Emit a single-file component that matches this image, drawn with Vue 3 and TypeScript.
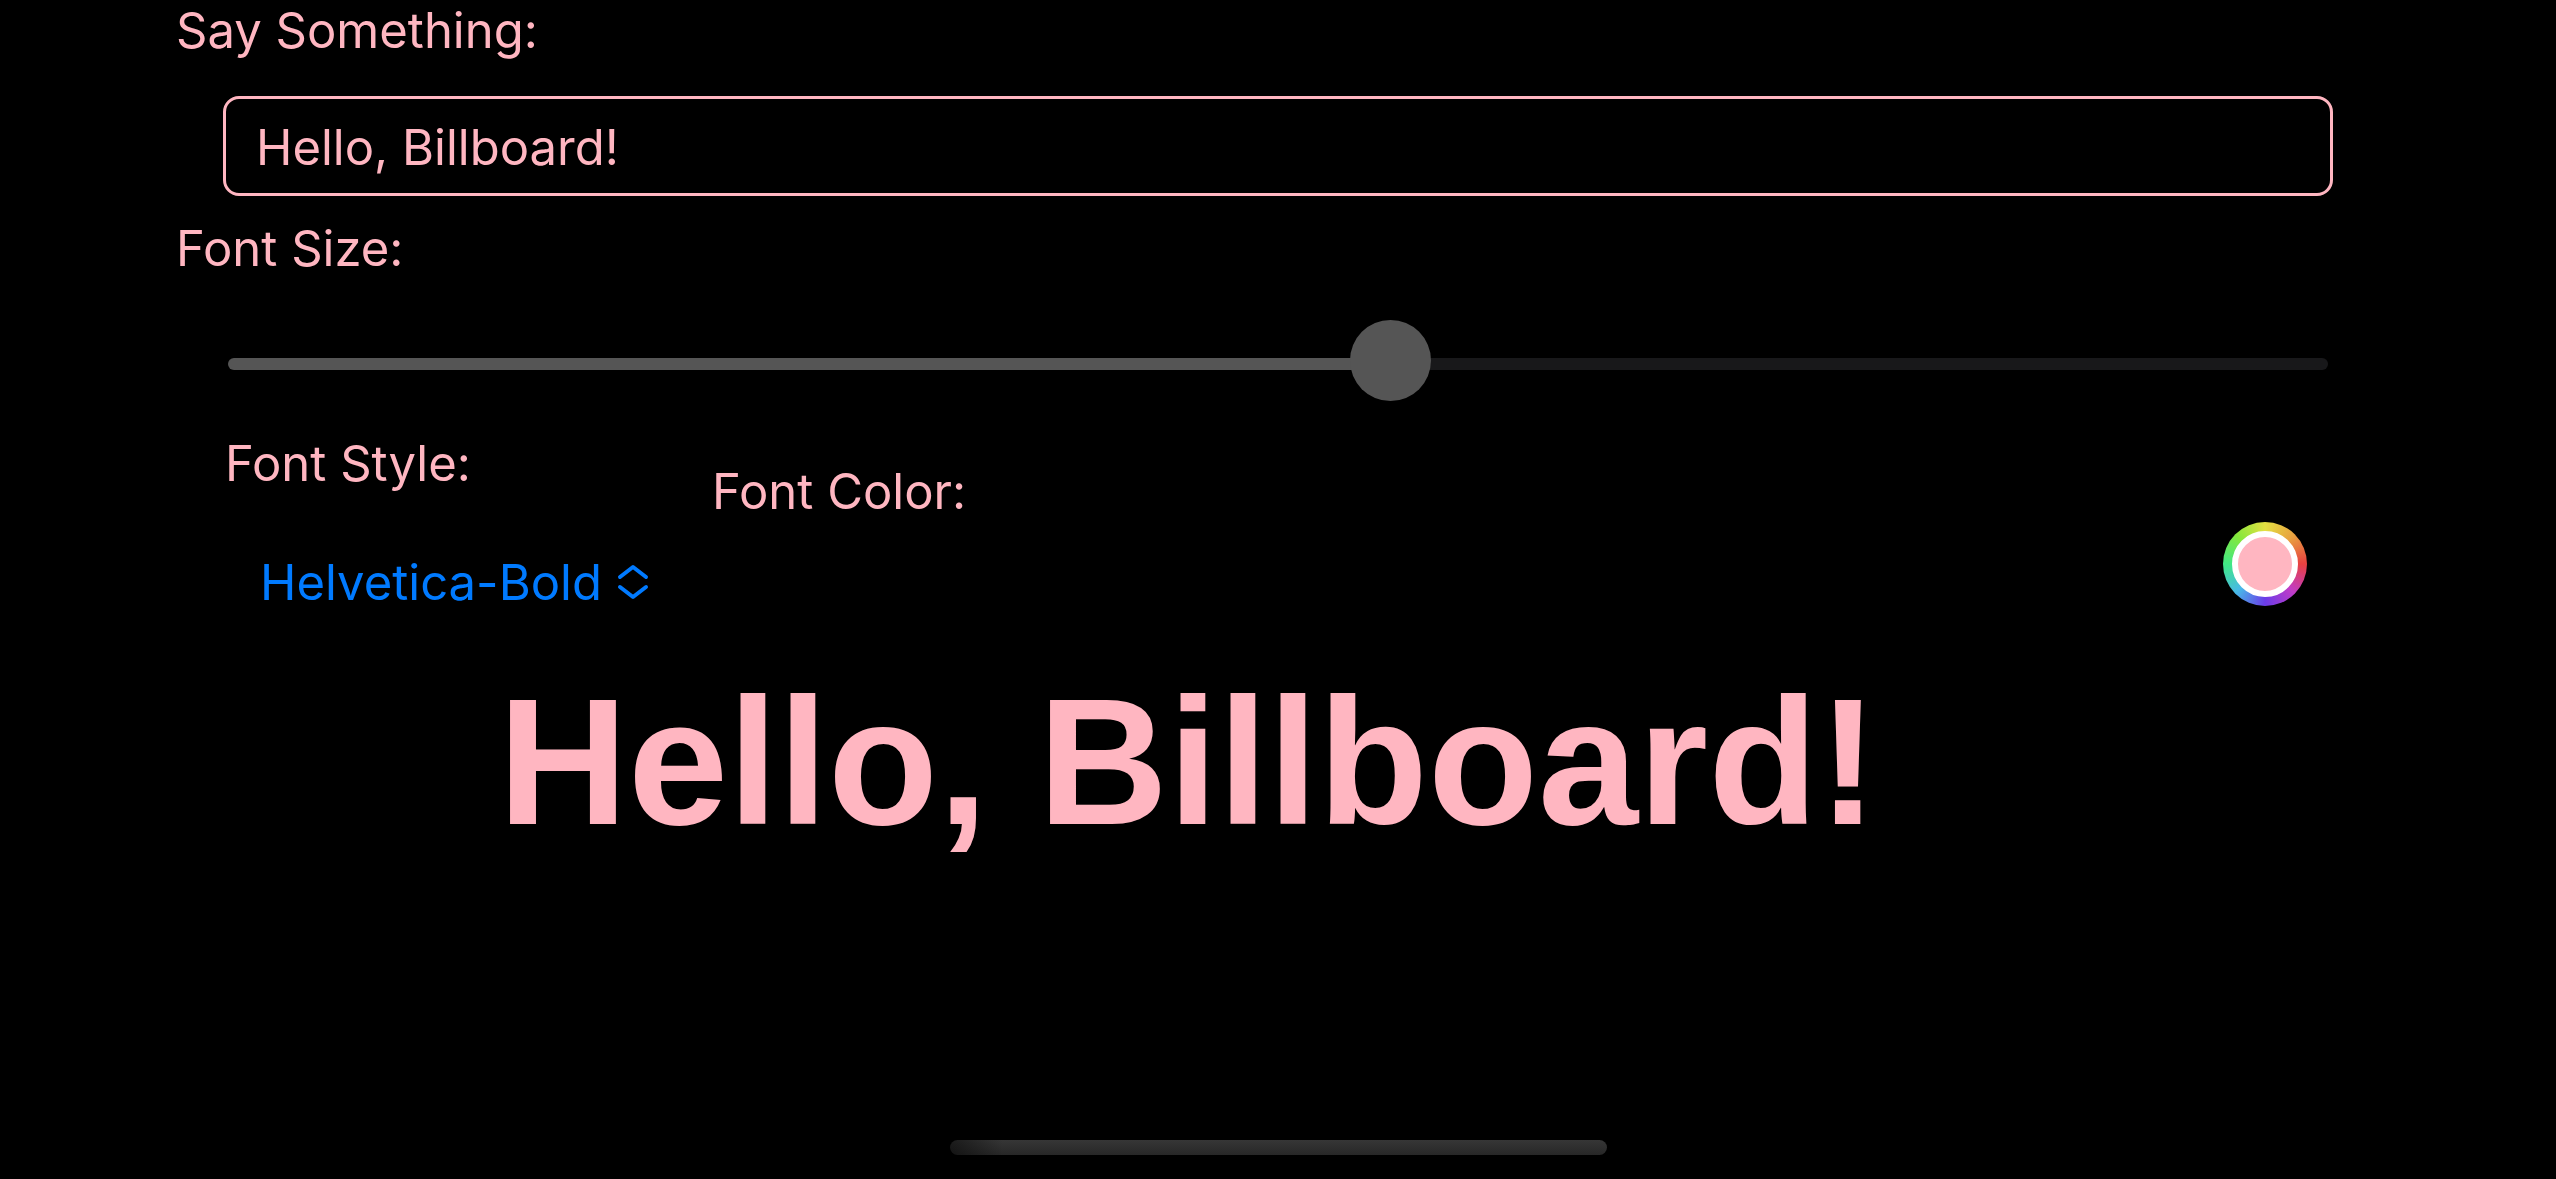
<script setup lang="ts">
import { computed, ref } from 'vue'

const message = ref('Hello, Billboard!')
const fontSize = ref(60)
const minSize = 10
const maxSize = 100
const fontStyle = ref('Helvetica-Bold')
const fontColor = ref('#ffb6c1')

const fontStyles: Record<string, { fontFamily: string; fontWeight: number }> = {
  'Helvetica-Bold': { fontFamily: '"Liberation Sans", Helvetica, sans-serif', fontWeight: 700 },
  Helvetica: { fontFamily: '"Liberation Sans", Helvetica, sans-serif', fontWeight: 400 },
  Times: { fontFamily: '"Liberation Serif", Times, serif', fontWeight: 400 },
  Courier: { fontFamily: '"Liberation Mono", Courier, monospace', fontWeight: 400 },
}

const fill = computed(() => `${((fontSize.value - minSize) / (maxSize - minSize)) * 100}%`)

// Sizes are chosen in points; one point is three pixels on this display.
const billboardStyle = computed(() => ({
  ...fontStyles[fontStyle.value],
  fontSize: `${fontSize.value * 3}px`,
}))
</script>

<template>
  <main class="screen" :style="{ '--tint': fontColor }">
    <label class="label" for="message">Say Something:</label>
    <input id="message" v-model="message" class="message" type="text" />

    <label class="label" for="size">Font Size:</label>
    <input
      id="size"
      v-model.number="fontSize"
      class="slider"
      type="range"
      :min="minSize"
      :max="maxSize"
      :style="{ '--fill': fill }"
    />

    <div class="options">
      <div class="style-field">
        <label class="label" for="style">Font Style:</label>
        <div class="picker">
          <select id="style" v-model="fontStyle" class="select">
            <option v-for="(_, name) in fontStyles" :key="name" :value="name">{{ name }}</option>
          </select>
          <svg class="chevrons" viewBox="0 0 34 36" aria-hidden="true">
            <path d="M4 13 17 3l13 10M4 23l13 10 13-10" />
          </svg>
        </div>
      </div>
      <div class="color-field">
        <label class="label" for="color">Font Color:</label>
        <input id="color" v-model="fontColor" class="well" type="color" />
      </div>
    </div>

    <p class="billboard" :style="billboardStyle">{{ message }}</p>
    <div class="home-indicator"></div>
  </main>
</template>

<style>
body {
  margin: 0;
  background: #000;
}
</style>

<style scoped>
.screen {
  box-sizing: border-box;
  min-height: 100vh;
  padding: 1px 176px 24px;
  display: flex;
  flex-direction: column;
  background: #000;
  color: var(--tint);
  font-family: Inter, "Noto Sans", sans-serif;
  font-size: 49px;
  line-height: 60px;
}

.label {
  display: block;
}

.message {
  box-sizing: border-box;
  height: 100px;
  margin: 35px 47px 23px;
  padding: 2px 30px 0;
  border: 3px solid var(--tint);
  border-radius: 16px;
  outline: none;
  background: transparent;
  color: inherit;
  font: inherit;
}

.slider {
  height: 81px;
  margin: 41px 52px 33px;
  appearance: none;
  background: transparent;
}

.slider::-webkit-slider-runnable-track {
  height: 12px;
  margin-top: 7px;
  border-radius: 6px;
  background: linear-gradient(to right, #555 var(--fill), #18181a var(--fill));
}

.slider::-webkit-slider-thumb {
  appearance: none;
  width: 81px;
  height: 81px;
  margin-top: -38px;
  border-radius: 50%;
  background: #555;
}

.options {
  display: flex;
  align-items: flex-start;
  padding: 0 52px 0 49px;
}

.style-field {
  display: flex;
  flex-direction: column;
  gap: 59px;
  width: 487px;
}

.picker {
  display: flex;
  align-items: center;
  padding-left: 35px;
}

.select {
  height: 60px;
  margin: 0;
  padding: 0;
  border: 0;
  outline: none;
  appearance: none;
  background: transparent;
  color: #007aff;
  font: inherit;
}

.chevrons {
  width: 34px;
  height: 36px;
  margin: 0 0 2px 14px;
  fill: none;
  stroke: #007aff;
  stroke-width: 4;
  stroke-linecap: round;
  stroke-linejoin: round;
}

.color-field {
  flex: 1;
  display: flex;
  flex-direction: column;
  padding: 28px 21px 0 0;
}

.well {
  box-sizing: border-box;
  align-self: flex-end;
  width: 84px;
  height: 84px;
  padding: 9px;
  border: 0;
  border-radius: 50%;
  appearance: none;
  background: conic-gradient(
    #e4e042,
    #e8a040 45deg,
    #e84040 90deg,
    #c03cc8 135deg,
    #6a3ce8 180deg,
    #48b8e8 225deg,
    #40e884 270deg,
    #84e83c 315deg,
    #e4e042
  );
}

.well::-webkit-color-swatch-wrapper {
  padding: 0;
}

.well::-webkit-color-swatch {
  border: 6px solid #fff;
  border-radius: 50%;
}

.billboard {
  margin: 49px 180px 0 0;
  line-height: 200px;
  text-align: center;
}

.home-indicator {
  align-self: center;
  width: 657px;
  height: 15px;
  margin-top: auto;
  border-radius: 8px;
  background:
    linear-gradient(to right, rgba(0, 0, 0, 0.5), transparent 8%),
    linear-gradient(#363636, #272727);
}
</style>
